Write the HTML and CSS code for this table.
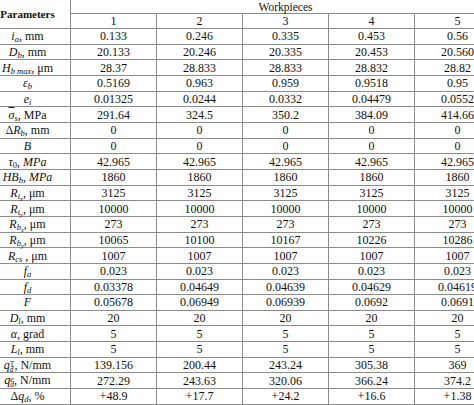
FILE: index.html
```html
<!DOCTYPE html>
<html>
<head>
<meta charset="utf-8">
<link rel="stylesheet" href="styles.css">
</head>
<body>
<div class="wrap">
<table class="grid">
<colgroup><col><col><col><col><col><col></colgroup>
<tr class="h1"><td class="param-head" rowspan="2">Parameters</td><td class="wp" colspan="5">Workpieces</td></tr>
<tr class="h2"><td>1</td><td>2</td><td>3</td><td>4</td><td>5</td></tr>
<tr><td class="lbl"><i>i</i><sub><i>a</i></sub>, mm</td><td>0.133</td><td>0.246</td><td>0.335</td><td>0.453</td><td>0.56</td></tr>
<tr><td class="lbl"><i>D</i><sub><i>b</i></sub>, mm</td><td>20.133</td><td>20.246</td><td>20.335</td><td>20.453</td><td>20.560</td></tr>
<tr><td class="lbl"><i>H</i><sub><i>b max</i></sub>, μm</td><td>28.37</td><td>28.833</td><td>28.833</td><td>28.832</td><td>28.82</td></tr>
<tr><td class="lbl"><i>ε</i><sub><i>b</i></sub></td><td>0.5169</td><td>0.963</td><td>0.959</td><td>0.9518</td><td>0.95</td></tr>
<tr><td class="lbl"><i>e</i><sub><i>i</i></sub></td><td>0.01325</td><td>0.0244</td><td>0.0332</td><td>0.04479</td><td>0.0552</td></tr>
<tr><td class="lbl"><i class="bar">σ</i><sub><i>s</i></sub>, MPa</td><td>291.64</td><td>324.5</td><td>350.2</td><td>384.09</td><td>414.66</td></tr>
<tr><td class="lbl">Δ<i>R</i><sub><i>b</i></sub>, mm</td><td>0</td><td>0</td><td>0</td><td>0</td><td>0</td></tr>
<tr><td class="lbl"><i>B</i></td><td>0</td><td>0</td><td>0</td><td>0</td><td>0</td></tr>
<tr><td class="lbl"><i>τ</i><sub>0</sub>, <i>MPa</i></td><td>42.965</td><td>42.965</td><td>42.965</td><td>42.965</td><td>42.965</td></tr>
<tr><td class="lbl"><i>HB</i><sub><i>b</i></sub>, <i>MPa</i></td><td>1860</td><td>1860</td><td>1860</td><td>1860</td><td>1860</td></tr>
<tr><td class="lbl"><i>R</i><span class="s1"><i>t</i><span class="s2"><i>x</i></span></span>, μm</td><td>3125</td><td>3125</td><td>3125</td><td>3125</td><td>3125</td></tr>
<tr><td class="lbl"><i>R</i><span class="s1"><i>t</i><span class="s2"><i>y</i></span></span>, μm</td><td>10000</td><td>10000</td><td>10000</td><td>10000</td><td>10000</td></tr>
<tr><td class="lbl"><i>R</i><span class="s1"><i>b</i><span class="s2"><i>x</i></span></span>, μm</td><td>273</td><td>273</td><td>273</td><td>273</td><td>273</td></tr>
<tr><td class="lbl"><i>R</i><span class="s1"><i>b</i><span class="s2"><i>y</i></span></span>, μm</td><td>10065</td><td>10100</td><td>10167</td><td>10226</td><td>10286</td></tr>
<tr><td class="lbl"><i>R</i><sub><i>cs</i></sub> , μm</td><td>1007</td><td>1007</td><td>1007</td><td>1007</td><td>1007</td></tr>
<tr><td class="lbl"><i>f</i><sub><i>a</i></sub></td><td>0.023</td><td>0.023</td><td>0.023</td><td>0.023</td><td>0.023</td></tr>
<tr><td class="lbl"><i>f</i><sub><i>d</i></sub></td><td>0.03378</td><td>0.04649</td><td>0.04639</td><td>0.04629</td><td>0.04619</td></tr>
<tr><td class="lbl"><i>F</i></td><td>0.05678</td><td>0.06949</td><td>0.06939</td><td>0.0692</td><td>0.0691</td></tr>
<tr><td class="lbl"><i>D</i><sub><i>l</i></sub>, mm</td><td>20</td><td>20</td><td>20</td><td>20</td><td>20</td></tr>
<tr><td class="lbl"><i>α</i>, grad</td><td>5</td><td>5</td><td>5</td><td>5</td><td>5</td></tr>
<tr><td class="lbl"><i>L</i><sub><i>l</i></sub>, mm</td><td>5</td><td>5</td><td>5</td><td>5</td><td>5</td></tr>
<tr><td class="lbl"><i>q</i><span class="stack"><span class="up">T</span><span class="dn"><i>d</i></span></span>, N/mm</td><td>139.156</td><td>200.44</td><td>243.24</td><td>305.38</td><td>369</td></tr>
<tr><td class="lbl"><i>q</i><span class="stack"><span class="up"><i>e</i></span><span class="dn"><i>d</i></span></span>, N/mm</td><td>272.29</td><td>243.63</td><td>320.06</td><td>366.24</td><td>374.2</td></tr>
<tr class="last"><td class="lbl">Δ<i>q</i><sub><i>d</i></sub>, %</td><td>+48.9</td><td>+17.7</td><td>+24.2</td><td>+16.6</td><td>+1.38</td></tr>
</table>
</div>
</body>
</html>
```

FILE: styles.css
```css
html, body {
  margin: 0;
  padding: 0;
  background: #ffffff;
}
body {
  width: 474px;
  height: 405px;
  overflow: hidden;
}
.wrap {
  margin-left: -16px;
  width: 516px;
}
.grid {
  border-collapse: collapse;
  table-layout: fixed;
  width: 516px;
  font-family: "Liberation Serif", "Times New Roman", serif;
  font-size: 12px;
  color: #111111;
}
.grid col {
  width: 86px;
}
.grid td {
  border: 1px solid #8c8c8c;
  padding: 0;
  text-align: center;
  vertical-align: middle;
  line-height: 12px;
  white-space: nowrap;
  overflow: visible;
  height: 14.67px;
}
.grid tr.h1 td {
  border-top: none;
  height: 13px;
}
.grid tr.h2 td {
  height: 14px;
}
.grid td.param-head {
  font-weight: bold;
  font-size: 11px;
  border-top: none;
}
.grid td.wp {
  font-size: 11.5px;
  border-top: none;
}
.grid sub {
  font-size: 8.5px;
  line-height: 0;
  vertical-align: -2px;
}
.s1 {
  font-size: 8.5px;
  line-height: 0;
  vertical-align: -2px;
}
.s2 {
  font-size: 6.5px;
  line-height: 0;
  position: relative;
  top: 2px;
}
.stack {
  display: inline-block;
  vertical-align: -3px;
  line-height: 5px;
  font-size: 7.5px;
  text-align: left;
}
.stack .up, .stack .dn {
  display: block;
  height: 5px;
}
.bar {
  text-decoration: overline;
}
```
